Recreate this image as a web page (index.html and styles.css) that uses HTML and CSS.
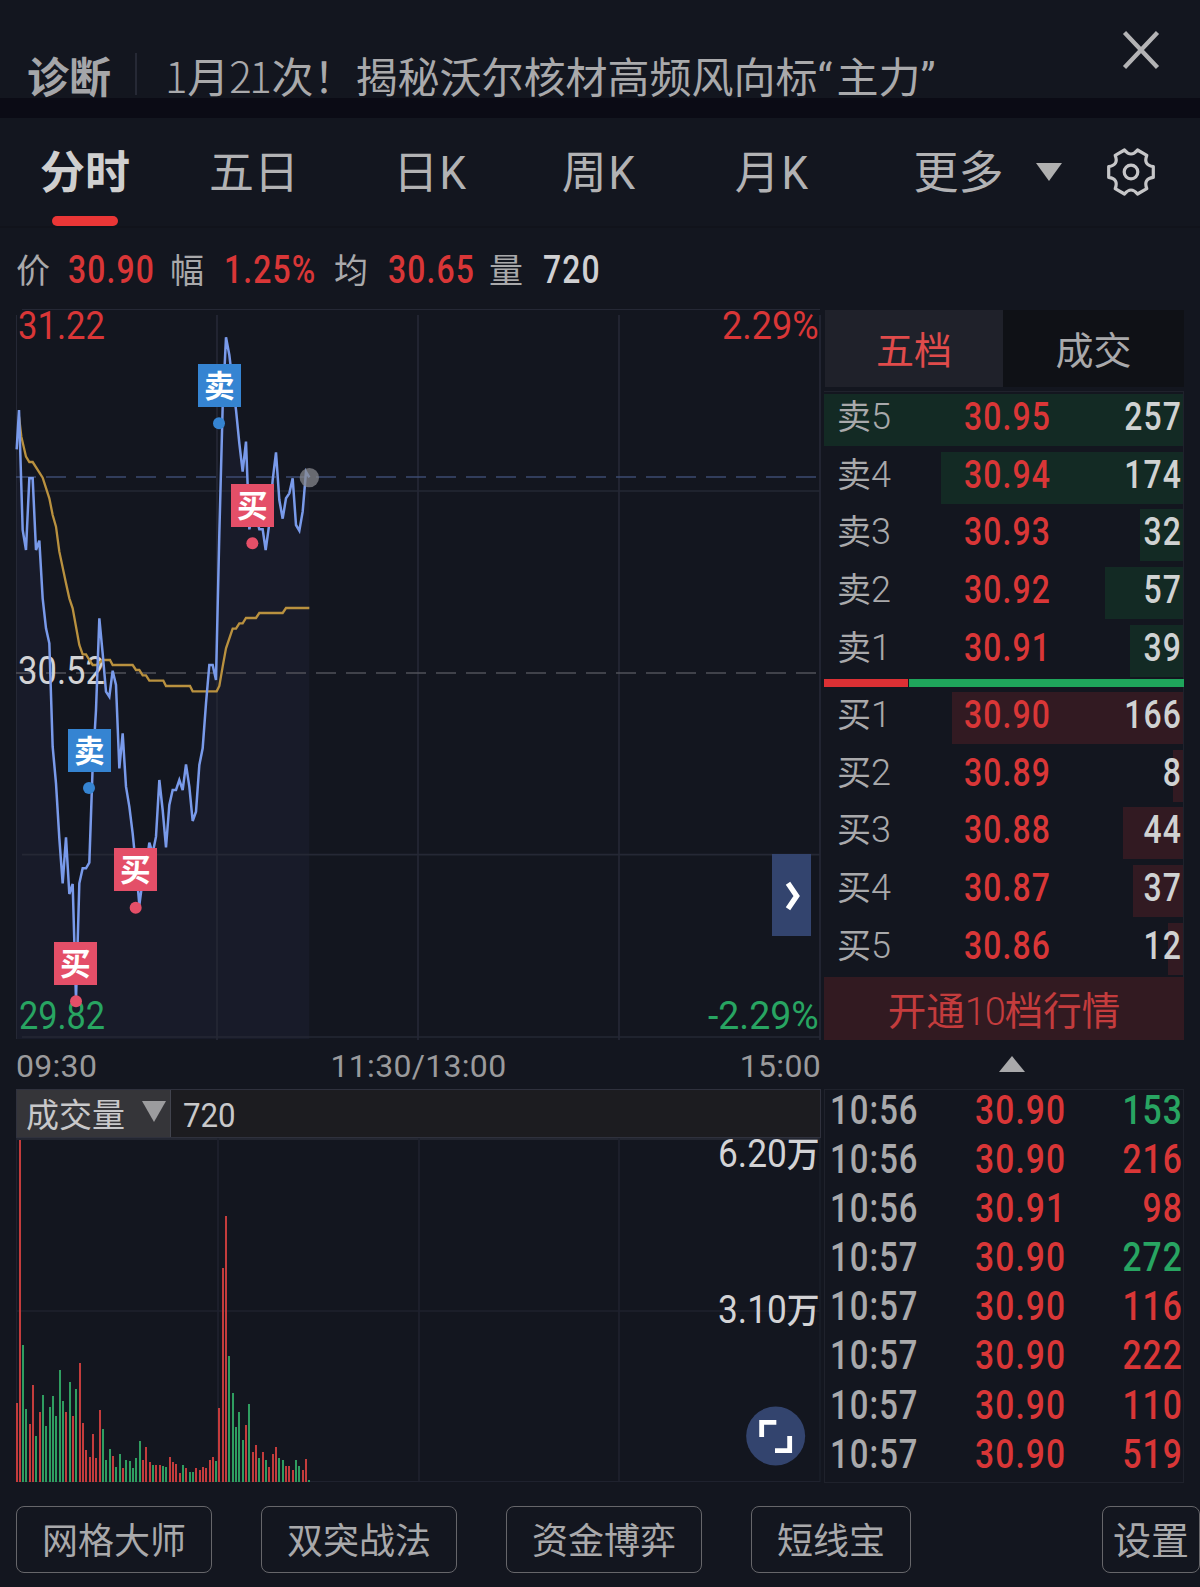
FILE: index.html
```html
<!DOCTYPE html>
<html lang="zh-CN">
<head>
<meta charset="utf-8">
<title>分时</title>
<link rel="stylesheet" href="styles.css">
</head>
<body>
<header class="news">
  <b class="news-tag">诊断</b>
  <p class="news-title"><span class="lat">1</span>月<span class="lat">21</span>次！揭秘沃尔核材高频风向标<span class="quote">“</span>主力<span class="quote">”</span></p>
  <svg class="close" viewBox="0 0 36 42" width="36" height="42"><path d="M1.5 3.500 34.500 38.500M34.500 3.500 1.500 38.500" fill="none" stroke="#b3b3b5" stroke-width="4.300"/></svg>
</header>

<nav class="tabs">
  <span class="tab active">分时</span>
  <span class="tab">五日</span>
  <span class="tab">日<i>K</i></span>
  <span class="tab">周<i>K</i></span>
  <span class="tab">月<i>K</i></span>
  <span class="tab more">更多</span>
  <svg class="caret" viewBox="0 0 26 18" width="26" height="18"><path d="M0 0H26L13 18Z" fill="#b0b0b0"/></svg>
  <svg class="gear" viewBox="-25 -25 50 50" width="50" height="50"><g fill="none" stroke="#c6c6c8" stroke-width="3.200" stroke-linejoin="round"><path d="M6.500-22 15.800-16.600Q12-7 22.300-5.400V5.400Q12 7 15.800 16.600L6.500 22Q0 14-6.500 22L-15.800 16.600Q-12 7-22.300 5.400V-5.400Q-12-7-15.800-16.600L-6.500-22Q0-14 6.500-22Z"/><circle r="6.800"/></g></svg>
</nav>

<div class="quote-row">
  <span>价</span><b class="num up">30.90</b>
  <span>幅</span><b class="num up">1.25%</b>
  <span>均</span><b class="num up">30.65</b>
  <span>量</span><b class="num">720</b>
</div>

<main class="board">
  <section class="left">
    <svg class="price-chart" viewBox="48 27 2418 2193" width="806" height="731">
      <path fill="#181b29" d="M50 448 57 330 68 690 78 750 88 535H98L108 750 118 722 128 895 138 985 148 1030 158 1340 168 1450 178 1615 188 1750 198 1612 208 1782 218 1752 228 2100 238 1750 248 1705H258L268 1688 278 1400 288 1230 298 955 308 1060 318 1175 328 1190 338 1112 348 1155 358 1405 368 1300 378 1460 388 1520 398 1600 408 1700 418 1815 428 1740 438 1700 448 1628 458 1660 468 1610 478 1440 488 1530 498 1642 508 1515 518 1470H528L538 1440 548 1470 558 1393 568 1460 578 1563 588 1535 598 1395 608 1345 618 1210 628 1095H638L648 1140 658 700 668 320 678 112 688 165 698 250 708 330 718 430 728 515 738 425 748 688 758 640 768 650 778 688H788L797 750 808 670 818 540 828 457 838 600 848 656 858 595 868 580 878 535 888 675 898 692 908 635 918 515 928 532V2217H50Z"/>
      <g fill="none" stroke="#252835" stroke-width="5">
        <path stroke-width="3" d="M66 28.500H2460M49.500 45V2217"/>
        <path d="M651 45V2220M1254 45V2220M1857 45V2220M2460 45V2220M66 573H2460M66 1664H2460M66 2211H2460"/>
      </g>
      <path d="M48 1119H2448" stroke="#50525a" stroke-width="5" stroke-dasharray="60 30"/>
      <path d="M48 531H2448" stroke="#3c4b71" stroke-width="5" stroke-dasharray="60 30"/>
      <g class="axis">
        <text class="a-up" x="54" y="118" textLength="261" lengthAdjust="spacingAndGlyphs">31.22</text>
        <text class="a-up" x="2166" y="118" textLength="290" lengthAdjust="spacingAndGlyphs">2.29%</text>
        <text class="a-mid" x="54" y="1153" textLength="261" lengthAdjust="spacingAndGlyphs">30.52</text>
        <text class="a-down" x="57" y="2187" textLength="258" lengthAdjust="spacingAndGlyphs">29.82</text>
        <text class="a-down" x="2124" y="2187" textLength="332" lengthAdjust="spacingAndGlyphs">-2.29%</text>
      </g>
      <path fill="none" stroke="#b9913f" stroke-width="7" d="M57 350 64 410 78 470 88 486H98L128 533 148 595 158 645 168 680 178 755 198 850 208 895 218 925 238 1035 248 1063H258L268 1080 278 1095H290L308 1080H330L338 1095H398L408 1110H418L428 1126H438L448 1142H490L498 1158H570L578 1174H650L658 1158 668 1100 678 1045 698 986H708L718 970H728L738 954H768L778 939H848L858 924H928"/>
      <path fill="none" stroke="#799aea" stroke-width="7.500" d="M50 448 57 330 68 690 78 750 88 535H98L108 750 118 722 128 895 138 985 148 1030 158 1340 168 1450 178 1615 188 1750 198 1612 208 1782 218 1752 228 2100 238 1750 248 1705H258L268 1688 278 1400 288 1230 298 955 308 1060 318 1175 328 1190 338 1112 348 1155 358 1405 368 1300 378 1460 388 1520 398 1600 408 1700 418 1815 428 1740 438 1700 448 1628 458 1660 468 1610 478 1440 488 1530 498 1642 508 1515 518 1470H528L538 1440 548 1470 558 1393 568 1460 578 1563 588 1535 598 1395 608 1345 618 1210 628 1095H638L648 1140 658 700 668 320 678 112 688 165 698 250 708 330 718 430 728 515 738 425 748 688 758 640 768 650 778 688H788L797 750 808 670 818 540 828 457 838 600 848 656 858 595 868 580 878 535 888 675 898 692 908 635 918 515 928 532"/>
      <circle cx="928" cy="533" r="29" fill="#85878c" fill-opacity=".75"/>
      <g class="sell"><rect x="594" y="192" width="129" height="129"/><circle cx="657" cy="370" r="18"/><text x="658" y="291">卖</text></g>
      <g class="buy"><rect x="693" y="552" width="129" height="129"/><circle cx="757" cy="730" r="18"/><text x="757" y="651">买</text></g>
      <g class="sell"><rect x="204" y="1287" width="129" height="129"/><circle cx="267" cy="1464" r="18"/><text x="268" y="1386">卖</text></g>
      <g class="buy"><rect x="342" y="1644" width="129" height="129"/><circle cx="407" cy="1823" r="18"/><text x="406" y="1743">买</text></g>
      <g class="buy"><rect x="162" y="1926" width="129" height="129"/><circle cx="228" cy="2104" r="18"/><text x="226" y="2025">买</text></g>
      <rect x="2316" y="1662" width="117" height="246" fill="#33446e"/>
      <path d="M2364 1750 2390 1788 2364 1826" fill="none" stroke="#fff" stroke-width="16"/>
    </svg>
    <div class="times"><span>09:30</span><span>11:30/13:00</span><span>15:00</span></div>
    <div class="vol-head">
      <span class="vol-name">成交量<svg viewBox="0 0 24 21" width="24" height="21"><path d="M0 0H24L12 21Z" fill="#9c9c9e"/></svg></span>
      <span class="vol-value">720</span>
    </div>
    <svg class="vol-chart" viewBox="48 -396 2418 1035" width="806" height="345">
      <g fill="none" stroke="#1f222e" stroke-width="5">
        <path d="M48 -393H2460" stroke="#2a2c38"/>
        <path d="M654-396V636M1257-396V636M1857-396V636M48 123H2460"/>
        <path stroke-width="3" d="M49.500-396V636M2460-396V636M48 634.500H2460"/>
      </g>
      <path stroke="#c43c3c" stroke-width="6" d="M51 636V399M60 636V-390M90 636V462M99 636V345M120 636V426M198 636V426M219 636V438M240 636V279M249 636V459M258 636V540M270 636V561M279 636V492M288 636V564M300 636V420M339 636V558M369 636V594M429 636V570M438 636V531M450 636V576M468 636V585M480 636V585M510 636V561M519 636V576M528 636V582M540 636V609M558 636V594M588 636V594M600 636V600M609 636V591M618 636V594M630 636V570M639 636V561M657 636V414M669 636V-6M678 636V-162M738 636V465M759 636V546M768 636V525M789 636V546M807 636V591M819 636V552M828 636V531M858 636V588M867 636V588M879 636V600M909 636V600M918 636V567"/>
      <path stroke="#2f9d60" stroke-width="6" d="M69 636V225M78 636V417M108 636V498M129 636V375M138 636V468M150 636V411M159 636V378M168 636V438M180 636V300M189 636V393M210 636V336M228 636V357M309 636V477M318 636V570M330 636V537M348 636V591M360 636V552M378 636V570M390 636V573M399 636V594M408 636V564M420 636V513M459 636V585M489 636V588M498 636V591M549 636V585M570 636V606M579 636V606M648 636V573M687 636V258M699 636V369M708 636V471M717 636V426M729 636V510M747 636V402M777 636V564M798 636V570M837 636V564M849 636V570M888 636V570M897 636V588M927 636V630"/>
      <g class="axis a-mid">
        <text x="2154" y="-308" textLength="305" lengthAdjust="spacingAndGlyphs">6.20<tspan class="wan">万</tspan></text>
        <text x="2154" y="159" textLength="305" lengthAdjust="spacingAndGlyphs">3.10<tspan class="wan">万</tspan></text>
      </g>
      <circle cx="2327" cy="498" r="88.500" fill="#33446e"/>
      <path d="M2285 501V457H2329M2325 542H2369V498" fill="none" stroke="#fff" stroke-width="14.500"/>
    </svg>
  </section>

  <aside class="right">
    <div class="book-tabs"><span class="on">五档</span><span>成交</span></div>
    <div class="book asks">
      <div class="row" style="--w:360px"><span>卖<i>5</i></span><b class="num up">30.95</b><b class="num qty">257</b></div>
      <div class="row" style="--w:243px"><span>卖<i>4</i></span><b class="num up">30.94</b><b class="num qty">174</b></div>
      <div class="row" style="--w:44px"><span>卖<i>3</i></span><b class="num up">30.93</b><b class="num qty">32</b></div>
      <div class="row" style="--w:79px"><span>卖<i>2</i></span><b class="num up">30.92</b><b class="num qty">57</b></div>
      <div class="row" style="--w:54px"><span>卖<i>1</i></span><b class="num up">30.91</b><b class="num qty">39</b></div>
    </div>
    <div class="ratio"><span></span><span></span></div>
    <div class="book bids">
      <div class="row" style="--w:232px"><span>买<i>1</i></span><b class="num up">30.90</b><b class="num qty">166</b></div>
      <div class="row" style="--w:11px"><span>买<i>2</i></span><b class="num up">30.89</b><b class="num qty">8</b></div>
      <div class="row" style="--w:61px"><span>买<i>3</i></span><b class="num up">30.88</b><b class="num qty">44</b></div>
      <div class="row" style="--w:51px"><span>买<i>4</i></span><b class="num up">30.87</b><b class="num qty">37</b></div>
      <div class="row" style="--w:16px"><span>买<i>5</i></span><b class="num up">30.86</b><b class="num qty">12</b></div>
    </div>
    <div class="upgrade">开通<i>10</i>档行情</div>
    <div class="expand"><svg viewBox="0 0 26 16" width="26" height="16"><path d="M0 16H26L13 0Z" fill="#a9a9ab"/></svg></div>
    <div class="ticks">
      <div class="tick"><b class="num">10:56</b><b class="num up">30.90</b><b class="num qty down">153</b></div>
      <div class="tick"><b class="num">10:56</b><b class="num up">30.90</b><b class="num qty up">216</b></div>
      <div class="tick"><b class="num">10:56</b><b class="num up">30.91</b><b class="num qty up">98</b></div>
      <div class="tick"><b class="num">10:57</b><b class="num up">30.90</b><b class="num qty down">272</b></div>
      <div class="tick"><b class="num">10:57</b><b class="num up">30.90</b><b class="num qty up">116</b></div>
      <div class="tick"><b class="num">10:57</b><b class="num up">30.90</b><b class="num qty up">222</b></div>
      <div class="tick"><b class="num">10:57</b><b class="num up">30.90</b><b class="num qty up">110</b></div>
      <div class="tick"><b class="num">10:57</b><b class="num up">30.90</b><b class="num qty up">519</b></div>
    </div>
  </aside>
</main>

<footer class="tools">
  <span>网格大师</span><span>双突战法</span><span>资金博弈</span><span class="short">短线宝</span><span class="settings">设置</span>
</footer>
</body>
</html>
```
FILE: styles.css
```css
* { box-sizing: border-box; }
body {
  margin: 0;
  width: 1200px;
  height: 1587px;
  overflow: hidden;
  background: #13161f;
  color: #a9a9ab;
  font-family: "Noto Sans CJK SC", sans-serif;
}
i { font-style: normal; font-family: Roboto, sans-serif; font-weight: 300; }
svg { display: block; overflow: visible; }
p { margin: 0; }

.num {
  display: inline-block;
  font-family: Roboto, sans-serif;
  font-weight: 500;
  letter-spacing: 1.300px;
  transform: scaleX(.84);
  transform-origin: left center;
  white-space: nowrap;
}
.up { color: #d93637; }
.down { color: #28a562; }

.news {
  display: flex;
  height: 118px;
  padding: 53px 41px 0 27px;
  border-bottom: 20px solid #0b0b15;
}
.news-tag {
  width: 110px;
  height: 42px;
  border-right: 2px solid #262935;
  font-size: 42px;
  line-height: 43px;
  color: #a5a6a9;
}
.news-title {
  flex: 1;
  padding-left: 28px;
  font-size: 42px;
  line-height: 43px;
  font-weight: 400;
  white-space: nowrap;
}
.lat { display: inline-block; letter-spacing: -2.300px; font-weight: 300; }
.lat:first-child { margin-right: 2px; }
.lat + .lat { margin-right: 2px; }
.quote { font-family: Roboto, sans-serif; letter-spacing: 4px; }
.close { margin-top: -24px; }

.tabs {
  display: grid;
  grid-template-columns: 170px 168px 185px 152px 194px 179px 59px 1fr;
  height: 110px;
  border-bottom: 2px solid #11131b;
  font-size: 45px;
  line-height: 104px;
  font-weight: 400;
  text-align: center;
  color: #b2b2b4;
}
.active {
  display: flex;
  flex-direction: column;
  align-items: center;
  font-weight: 700;
  color: #cfcfcf;
}
.active::after {
  content: "";
  width: 66px;
  height: 10px;
  margin-top: -6px;
  border-radius: 5px;
  background: #ea3636;
}
.tab i { font-size: 47px; font-weight: 400; display: inline-block; transform: scaleX(.9); }
.caret { margin-top: 45px; margin-left: -12px; }
.gear { margin-top: 29px; margin-left: -1px; }

.quote-row {
  display: grid;
  grid-template-columns: 52px 102px 54px 110px 54px 101px 54px 1fr;
  height: 81px;
  padding-left: 16px;
  font-size: 34px;
  line-height: 82px;
}
.quote-row .num { font-size: 38px; line-height: 85px; }
.quote-row .num:last-child { color: #d0d0d2; }

.board { display: grid; grid-template-columns: 808px 360px; padding-left: 16px; }
.left { display: flex; flex-direction: column; }
.axis text { font: 400 114px Roboto, sans-serif; }
.axis .wan { font: 500 106px "Noto Sans CJK SC", sans-serif; }
.a-up { fill: #d93637; }
.a-down { fill: #28a562; }
.a-mid { fill: #d3d3d5; }
.sell { fill: #3584d2; }
.buy { fill: #e44f68; }
.sell text, .buy text { fill: #fff; font: 700 92px "Noto Sans CJK SC", sans-serif; text-anchor: middle; }

.times {
  display: flex;
  justify-content: space-between;
  width: 805px;
  height: 49px;
  font: 400 32px/53px Roboto, sans-serif;
  letter-spacing: .3px;
  color: #9a9a9c;
}
.vol-head {
  display: flex;
  width: 805px;
  height: 49px;
  border: 1.500px solid #2f313d;
  background: #1c1c20;
  color: #c8c8ca;
  font-size: 33px;
  line-height: 46px;
}
.vol-name { display: flex; width: 154px; padding-left: 9px; background: #353539; border-right: 1px solid #42444e; }
.vol-name svg { margin: 11px 0 0 17px; }
.vol-value { padding-left: 10px; font: 400 34px/50px Roboto, sans-serif; transform: scaleX(.92); }

.book-tabs {
  display: grid;
  grid-template-columns: 179px 181px;
  height: 77px;
  margin-top: 1px;
  background: #0f1116;
  font-size: 38px;
  line-height: 75px;
  text-align: center;
}
.book-tabs .on { color: #e04b4b; background: #1f212a; border-left: 1px solid #13161f; }
.book { display: grid; grid-auto-rows: 52px; row-gap: 5.700px; }
.asks { --bar: #132a24; margin-top: 4px; padding-top: 2px; height: 288px; border-top: 1px solid #1f222c; border-right: 1px solid #1f222c; }
.bids { --bar: #321a22; height: 290px; padding-top: 5px; border-right: 1px solid #1f222c; }
.row {
  display: grid;
  grid-template-columns: 127px 1fr 90px;
  padding: 0 2px 0 13px;
  background: linear-gradient(var(--bar), var(--bar)) right top / calc(var(--w) - 1px) 100% no-repeat;
  font-size: 34px;
  line-height: 42px;
}
.row i { font-size: 36px; }
.row .num { font-size: 38px; line-height: 46px; }
.num.qty { text-align: right; transform-origin: right center; margin-right: -1px; }
.row .qty { color: #d0d2d2; }
.ratio { display: grid; grid-template-columns: 84px 275px; column-gap: 1px; height: 8px; }
.ratio span { background: #dc3034; }
.ratio span + span { background: #1fa55b; }
.upgrade {
  height: 63px;
  background: #321a21;
  color: #c43c3d;
  font-size: 38.500px;
  line-height: 62px;
  font-weight: 400;
  text-align: center;
}
.upgrade i { font-size: 38px; letter-spacing: -1px; }
.expand { display: flex; height: 49px; padding: 16px 0 0 175px; }
.ticks {
  display: grid;
  grid-auto-rows: 49.100px;
  height: 394px;
  border: 1px solid #1f222c;
}
.tick { display: grid; grid-template-columns: 145px 1fr 90px; padding: 0 1px 0 5px; font-size: 40px; line-height: 42px; }
.tick .num:first-child { transform: scaleX(.82); }

.tools { display: flex; gap: 49px; padding: 23px 0 0 16px; font-size: 36px; line-height: 62px; text-align: center; }
.tools span { width: 196px; height: 67px; border: 1.500px solid #66666a; border-radius: 8px; }
.tools .short { width: 160px; }
.tools .settings { width: 98px; margin-left: auto; font-size: 38px; }
```
